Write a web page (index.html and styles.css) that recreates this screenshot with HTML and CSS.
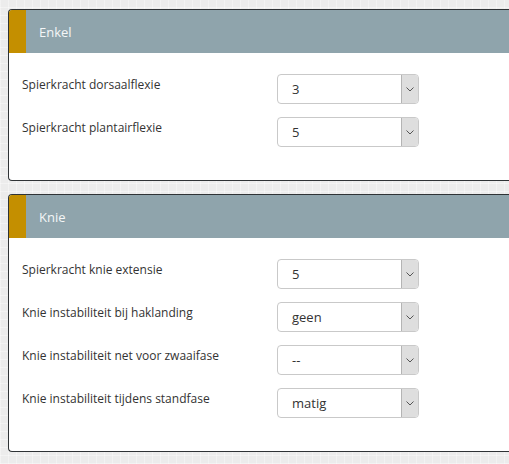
FILE: index.html
```html
<!DOCTYPE html>
<html lang="nl">
<head>
<meta charset="utf-8">
<title>Enkel en Knie</title>
<link rel="stylesheet" href="styles.css">
</head>
<body>
<main class="page">
  <section class="card">
    <header class="card-head"><span class="accent"></span><h2 class="card-title">Enkel</h2></header>
    <div class="card-body">
      <div class="row">
        <span class="label">Spierkracht dorsaalflexie</span>
        <div class="select"><span class="value">3</span><span class="arrow"><svg width="8" height="5" viewBox="0 0 8 5"><path d="M0.5 0.5 L4 4 L7.5 0.5" fill="none" stroke="#555" stroke-width="1"/></svg></span></div>
      </div>
      <div class="row">
        <span class="label">Spierkracht plantairflexie</span>
        <div class="select"><span class="value">5</span><span class="arrow"><svg width="8" height="5" viewBox="0 0 8 5"><path d="M0.5 0.5 L4 4 L7.5 0.5" fill="none" stroke="#555" stroke-width="1"/></svg></span></div>
      </div>
    </div>
  </section>
  <section class="card">
    <header class="card-head"><span class="accent"></span><h2 class="card-title">Knie</h2></header>
    <div class="card-body">
      <div class="row">
        <span class="label">Spierkracht knie extensie</span>
        <div class="select"><span class="value">5</span><span class="arrow"><svg width="8" height="5" viewBox="0 0 8 5"><path d="M0.5 0.5 L4 4 L7.5 0.5" fill="none" stroke="#555" stroke-width="1"/></svg></span></div>
      </div>
      <div class="row">
        <span class="label">Knie instabiliteit bij haklanding</span>
        <div class="select"><span class="value">geen</span><span class="arrow"><svg width="8" height="5" viewBox="0 0 8 5"><path d="M0.5 0.5 L4 4 L7.5 0.5" fill="none" stroke="#555" stroke-width="1"/></svg></span></div>
      </div>
      <div class="row">
        <span class="label">Knie instabiliteit net voor zwaaifase</span>
        <div class="select"><span class="value">--</span><span class="arrow"><svg width="8" height="5" viewBox="0 0 8 5"><path d="M0.5 0.5 L4 4 L7.5 0.5" fill="none" stroke="#555" stroke-width="1"/></svg></span></div>
      </div>
      <div class="row">
        <span class="label">Knie instabiliteit tijdens standfase</span>
        <div class="select"><span class="value">matig</span><span class="arrow"><svg width="8" height="5" viewBox="0 0 8 5"><path d="M0.5 0.5 L4 4 L7.5 0.5" fill="none" stroke="#555" stroke-width="1"/></svg></span></div>
      </div>
    </div>
  </section>
</main>
</body>
</html>
```
FILE: styles.css
```css
html, body {
  margin: 0;
  padding: 0;
  overflow: hidden;
}
body {
  background-color: #ececec;
  background-image:
    repeating-linear-gradient(0deg, rgba(255,255,255,0.35) 0 1px, transparent 1px 8px),
    repeating-linear-gradient(90deg, rgba(255,255,255,0.35) 0 1px, transparent 1px 8px);
  font-family: "Open Sans", "Noto Sans", sans-serif;
  font-size: 13px;
  color: #333;
  width: 509px;
  height: 464px;
}
.page {
  padding: 9px 0 0 8px;
  display: flex;
  flex-direction: column;
  gap: 13px;
}
.card {
  width: 501px;
  box-sizing: border-box;
  background: #fff;
  border: 1px solid #2f3336;
  border-right: none;
  border-radius: 4px 0 0 4px;
  overflow: hidden;
}
.card-head {
  display: flex;
  align-items: center;
  height: 43px;
  background: #8fa4ac;
}
.accent {
  width: 17px;
  align-self: stretch;
  background: #c48f00;
}
.card-title {
  margin: 0 0 0 13px;
  font-size: 13px;
  font-weight: 400;
  color: #f4f6f7;
}
.card-body {
  padding: 21px 0 33px 13px;
  display: flex;
  flex-direction: column;
  gap: 13px;
}
.row {
  display: flex;
  align-items: flex-start;
}
.label {
  width: 255px;
  font-size: 12px;
  line-height: 18px;
  padding-top: 2px;
  color: #333;
}
.select {
  width: 142px;
  height: 30px;
  box-sizing: border-box;
  border: 1px solid #c9c9c9;
  border-radius: 4px;
  display: flex;
  align-items: stretch;
  overflow: hidden;
  background: #fff;
}
.value {
  flex: 1;
  padding-left: 14px;
  line-height: 28px;
  color: #333;
}
.arrow {
  width: 16px;
  background: #dedede;
  border-left: 1px solid #b4b4b4;
  display: flex;
  align-items: center;
  justify-content: center;
}
```
